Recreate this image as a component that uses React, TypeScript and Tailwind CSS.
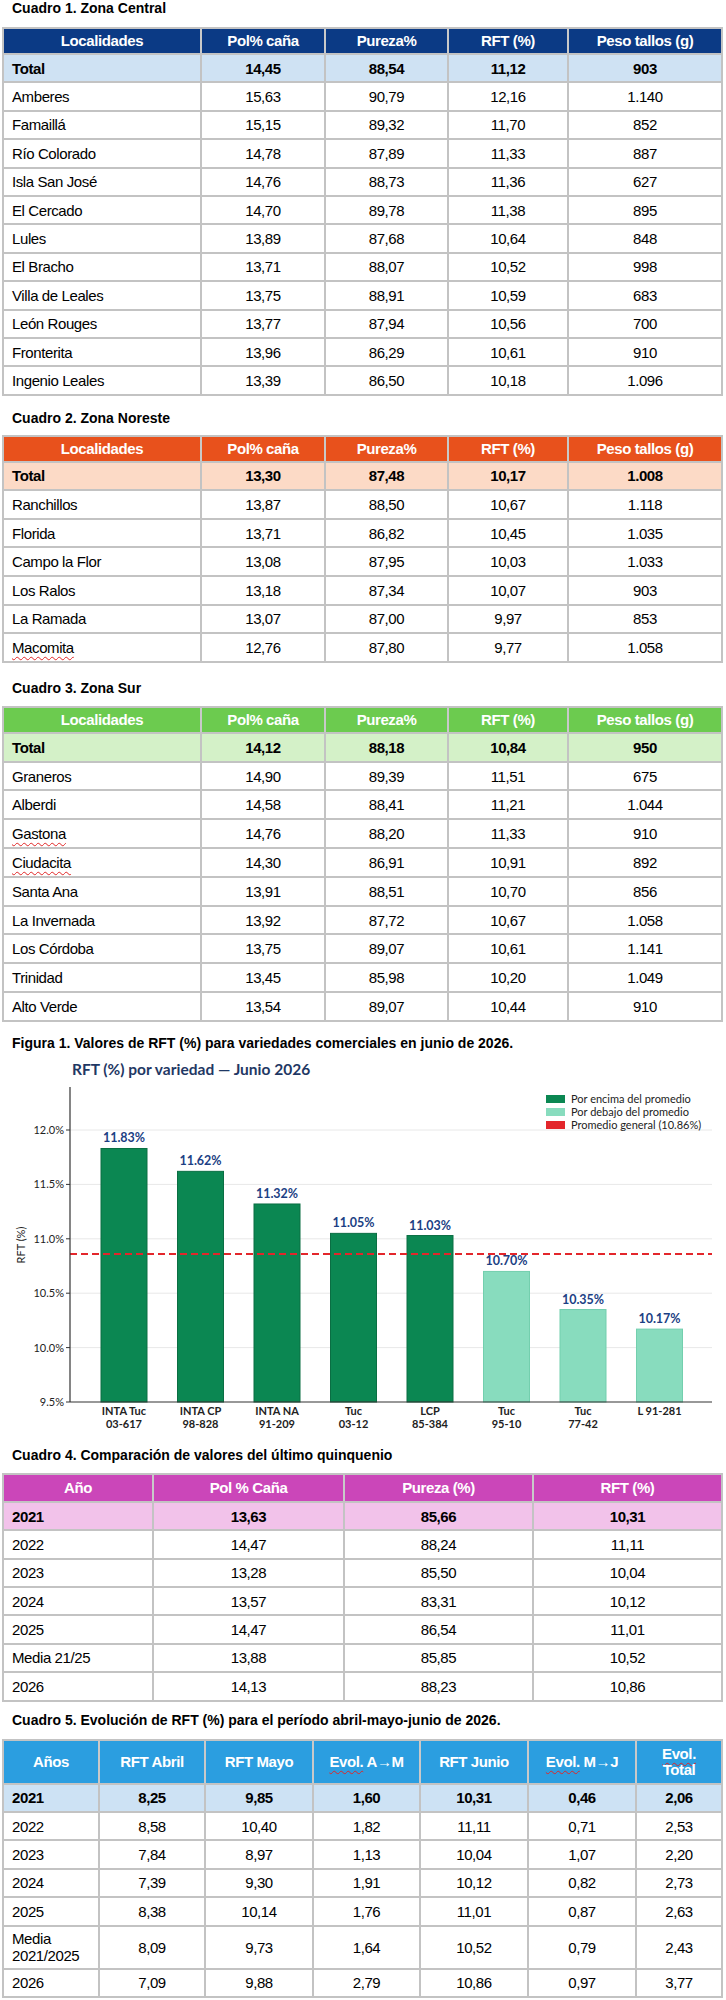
import React from 'react';

type Cell = React.ReactNode;
type Row = { cells: Cell[]; h?: string };

// spell-check style red squiggle seen in the source document
const Wavy = ({ children }: { children: React.ReactNode }) => (
    <span className="underline decoration-wavy decoration-[#e02626] decoration-1 underline-offset-[3px]">
        {children}
    </span>
);

function DataTable({
    grid,
    head,
    headBg,
    headH,
    totalBg,
    rowH,
    rows,
}: {
    grid: string;
    head: Cell[];
    headBg: string;
    headH: string;
    totalBg: string;
    rowH: string;
    rows: Row[];
}) {
    return (
        <div className="ml-[2px] w-[721px] border-2 border-[#c3c3c3] text-[15px] tracking-[-0.4px] text-black">
            <div className={`grid ${grid} ${headH} ${headBg} font-bold text-white`}>
                {head.map((h, i) => (
                    <div
                        key={i}
                        className={`flex items-center justify-center text-center leading-[16px] ${
                            i ? 'border-l-2 border-[#c9c9c9]' : ''
                        }`}
                    >
                        {h}
                    </div>
                ))}
            </div>
            {rows.map((r, ri) => (
                <div
                    key={ri}
                    className={`grid ${grid} ${r.h ?? rowH} border-t-2 border-[#c3c3c3] ${
                        ri === 0 ? `${totalBg} font-bold` : 'bg-white'
                    }`}
                >
                    {r.cells.map((c, ci) => (
                        <div
                            key={ci}
                            className={`flex items-center leading-[17px] ${
                                ci ? 'justify-center border-l-2 border-[#c3c3c3]' : 'pl-[8px]'
                            }`}
                        >
                            {c}
                        </div>
                    ))}
                </div>
            ))}
        </div>
    );
}

const zoneHead = ['Localidades', 'Pol% caña', 'Pureza%', 'RFT (%)', 'Peso tallos (g)'];
const zoneGrid = 'grid-cols-[196px_124px_123px_120px_154px]';

const r = (...cells: Cell[]): Row => ({ cells });

const central: Row[] = [
    r('Total', '14,45', '88,54', '11,12', '903'),
    r('Amberes', '15,63', '90,79', '12,16', '1.140'),
    r('Famaillá', '15,15', '89,32', '11,70', '852'),
    r('Río Colorado', '14,78', '87,89', '11,33', '887'),
    r('Isla San José', '14,76', '88,73', '11,36', '627'),
    r('El Cercado', '14,70', '89,78', '11,38', '895'),
    r('Lules', '13,89', '87,68', '10,64', '848'),
    r('El Bracho', '13,71', '88,07', '10,52', '998'),
    r('Villa de Leales', '13,75', '88,91', '10,59', '683'),
    r('León Rouges', '13,77', '87,94', '10,56', '700'),
    r('Fronterita', '13,96', '86,29', '10,61', '910'),
    r('Ingenio Leales', '13,39', '86,50', '10,18', '1.096'),
];

const noreste: Row[] = [
    r('Total', '13,30', '87,48', '10,17', '1.008'),
    r('Ranchillos', '13,87', '88,50', '10,67', '1.118'),
    r('Florida', '13,71', '86,82', '10,45', '1.035'),
    r('Campo la Flor', '13,08', '87,95', '10,03', '1.033'),
    r('Los Ralos', '13,18', '87,34', '10,07', '903'),
    r('La Ramada', '13,07', '87,00', '9,97', '853'),
    r(<Wavy>Macomita</Wavy>, '12,76', '87,80', '9,77', '1.058'),
];

const sur: Row[] = [
    r('Total', '14,12', '88,18', '10,84', '950'),
    r('Graneros', '14,90', '89,39', '11,51', '675'),
    r('Alberdi', '14,58', '88,41', '11,21', '1.044'),
    r(<Wavy>Gastona</Wavy>, '14,76', '88,20', '11,33', '910'),
    r(<Wavy>Ciudacita</Wavy>, '14,30', '86,91', '10,91', '892'),
    r('Santa Ana', '13,91', '88,51', '10,70', '856'),
    r('La Invernada', '13,92', '87,72', '10,67', '1.058'),
    r('Los Córdoba', '13,75', '89,07', '10,61', '1.141'),
    r('Trinidad', '13,45', '85,98', '10,20', '1.049'),
    r('Alto Verde', '13,54', '89,07', '10,44', '910'),
];

const quinquenio: Row[] = [
    r('2021', '13,63', '85,66', '10,31'),
    r('2022', '14,47', '88,24', '11,11'),
    r('2023', '13,28', '85,50', '10,04'),
    r('2024', '13,57', '83,31', '10,12'),
    r('2025', '14,47', '86,54', '11,01'),
    r('Media 21/25', '13,88', '85,85', '10,52'),
    r('2026', '14,13', '88,23', '10,86'),
];

const evolucion: Row[] = [
    r('2021', '8,25', '9,85', '1,60', '10,31', '0,46', '2,06'),
    r('2022', '8,58', '10,40', '1,82', '11,11', '0,71', '2,53'),
    r('2023', '7,84', '8,97', '1,13', '10,04', '1,07', '2,20'),
    r('2024', '7,39', '9,30', '1,91', '10,12', '0,82', '2,73'),
    r('2025', '8,38', '10,14', '1,76', '11,01', '0,87', '2,63'),
    {
        cells: [
            <span>
                Media
                <br />
                2021/2025
            </span>,
            '8,09',
            '9,73',
            '1,64',
            '10,52',
            '0,79',
            '2,43',
        ],
        h: 'h-[43px]',
    },
    r('2026', '7,09', '9,88', '2,79', '10,86', '0,97', '3,77'),
];

const bars = [
    { l1: 'INTA Tuc', l2: '03-617', v: 11.83, hi: true },
    { l1: 'INTA CP', l2: '98-828', v: 11.62, hi: true },
    { l1: 'INTA NA', l2: '91-209', v: 11.32, hi: true },
    { l1: 'Tuc', l2: '03-12', v: 11.05, hi: true },
    { l1: 'LCP', l2: '85-384', v: 11.03, hi: true },
    { l1: 'Tuc', l2: '95-10', v: 10.7, hi: false },
    { l1: 'Tuc', l2: '77-42', v: 10.35, hi: false },
    { l1: 'L 91-281', l2: '', v: 10.17, hi: false },
];

// plot geometry (svg coords)
const yOf = (v: number) => 346 - (v - 9.5) * 108.8;
const X0 = 70;
const X1 = 712;

function Chart() {
    const ticks = [9.5, 10, 10.5, 11, 11.5, 12];
    return (
        <svg width={726} height={376} className="block" style={{ fontFamily: 'Lato, "Open Sans", sans-serif' }}>
            <text x={72} y={19} fontSize={15.5} fontWeight={700} fill="#1f3864">
                RFT (%) por variedad — Junio 2026
            </text>

            {/* grid */}
            {ticks.slice(1).map((t) => (
                <line key={t} x1={X0} x2={X1} y1={yOf(t)} y2={yOf(t)} stroke="#e8e8e8" strokeWidth={1} />
            ))}

            {/* bars */}
            {bars.map((b, i) => {
                const x = 101 + i * 76.5;
                const top = yOf(b.v);
                return (
                    <g key={i}>
                        <rect
                            x={x}
                            y={top}
                            width={46}
                            height={346 - top}
                            fill={b.hi ? '#0b8752' : '#88dcbe'}
                            stroke={b.hi ? '#0a6e43' : '#73cfae'}
                            strokeWidth={1}
                        />
                        <text x={x + 23} y={top - 6} fontSize={12.5} fontWeight={700} fill="#1c3f84" textAnchor="middle">
                            {b.v.toFixed(2)}%
                        </text>
                        <text x={x + 23} y={359} fontSize={11} fontWeight={700} fill="#222" textAnchor="middle">
                            {b.l1}
                        </text>
                        <text x={x + 23} y={372} fontSize={11} fontWeight={700} fill="#222" textAnchor="middle">
                            {b.l2}
                        </text>
                    </g>
                );
            })}

            {/* promedio */}
            <line x1={X0} x2={X1} y1={yOf(10.86)} y2={yOf(10.86)} stroke="#e3262b" strokeWidth={2} strokeDasharray="7 4" />

            {/* axes */}
            <line x1={X0} x2={X0} y1={31} y2={346} stroke="#333" strokeWidth={1.2} />
            <line x1={X0} x2={X1} y1={346} y2={346} stroke="#333" strokeWidth={1.2} />
            {ticks.map((t) => (
                <g key={t}>
                    <line x1={X0 - 4} x2={X0} y1={yOf(t)} y2={yOf(t)} stroke="#333" />
                    <text x={X0 - 6} y={yOf(t) + 4} fontSize={11} fill="#222" textAnchor="end">
                        {t.toFixed(1)}%
                    </text>
                </g>
            ))}
            <text x={25} y={189} fontSize={11} fill="#222" textAnchor="middle" transform="rotate(-90 25 189)">
                RFT (%)
            </text>

            {/* legend */}
            {[
                { c: '#0b8752', t: 'Por encima del promedio', y: 43 },
                { c: '#88dcbe', t: 'Por debajo del promedio', y: 56 },
                { c: '#e3262b', t: 'Promedio general (10.86%)', y: 69 },
            ].map((l) => (
                <g key={l.t}>
                    <rect x={546} y={l.y - 4} width={19} height={8} fill={l.c} />
                    <text x={571} y={l.y + 4} fontSize={11} fill="#222">
                        {l.t}
                    </text>
                </g>
            ))}
        </svg>
    );
}

const Title = ({ children, cls }: { children: React.ReactNode; cls: string }) => (
    <div className={`${cls} pl-[12px] text-[14px] leading-[16px] font-bold text-black`}>{children}</div>
);

export default function App() {
    return (
        <div className="w-[726px] min-h-[2000px] bg-white font-['Liberation_Sans',Arial,sans-serif]">
            <Title cls="h-[27px]">Cuadro 1. Zona Central</Title>
            <DataTable
                grid={zoneGrid}
                head={zoneHead}
                headBg="bg-[#0b3a85]"
                headH="h-[24px]"
                totalBg="bg-[#cfe2f3]"
                rowH="h-[28.4px]"
                rows={central}
            />

            <Title cls="h-[39px] pt-[14px]">Cuadro 2. Zona Noreste</Title>
            <DataTable
                grid={zoneGrid}
                head={zoneHead}
                headBg="bg-[#e8511c]"
                headH="h-[24px]"
                totalBg="bg-[#fcdac6]"
                rowH="h-[28.6px]"
                rows={noreste}
            />

            <Title cls="h-[43px] pt-[17px]">Cuadro 3. Zona Sur</Title>
            <DataTable
                grid={zoneGrid}
                head={zoneHead}
                headBg="bg-[#6ccb4f]"
                headH="h-[24px]"
                totalBg="bg-[#d4f1c8]"
                rowH="h-[28.8px]"
                rows={sur}
            />

            <Title cls="h-[34px] pt-[13px]">
                Figura 1. Valores de RFT (%) para variedades comerciales en junio de 2026.
            </Title>
            <Chart />

            <Title cls="h-[41px] pt-[15px]">Cuadro 4. Comparación de valores del último quinquenio</Title>
            <DataTable
                grid="grid-cols-[148px_191px_189px_189px]"
                head={['Año', 'Pol % Caña', 'Pureza (%)', 'RFT (%)']}
                headBg="bg-[#cb46b9]"
                headH="h-[26px]"
                totalBg="bg-[#f2c2ea]"
                rowH="h-[28.4px]"
                rows={quinquenio}
            />

            <Title cls="h-[37px] pt-[10px]">
                Cuadro 5. Evolución de RFT (%) para el período abril-mayo-junio de 2026.
            </Title>
            <DataTable
                grid="grid-cols-[94px_106px_108px_107px_108px_108px_86px]"
                head={[
                    'Años',
                    'RFT Abril',
                    'RFT Mayo',
                    <span>
                        <Wavy>Evol.</Wavy> A→M
                    </span>,
                    'RFT Junio',
                    <span>
                        <Wavy>Evol.</Wavy> M→J
                    </span>,
                    <span>
                        <Wavy>Evol.</Wavy>
                        <br />
                        Total
                    </span>,
                ]}
                headBg="bg-[#2b9ee0]"
                headH="h-[42px]"
                totalBg="bg-[#cde2f4]"
                rowH="h-[28.4px]"
                rows={evolucion}
            />
        </div>
    );
}
